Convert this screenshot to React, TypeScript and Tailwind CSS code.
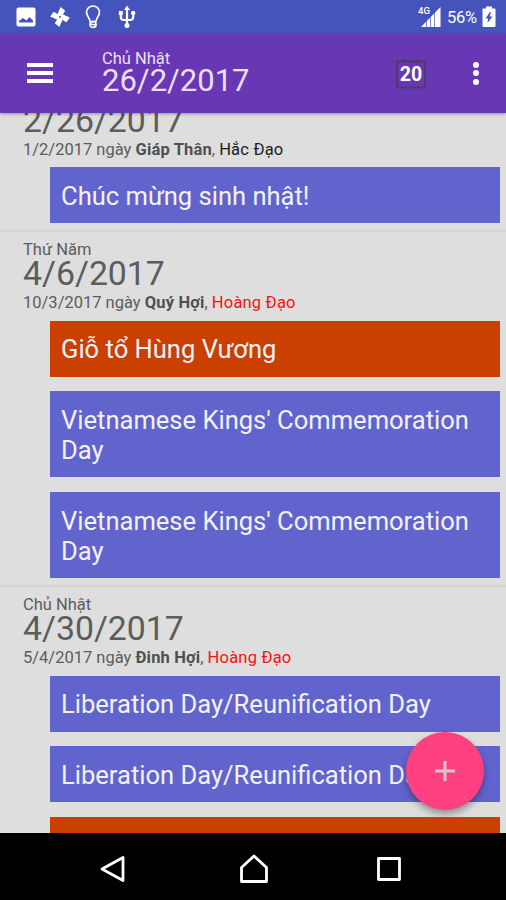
import type { ReactNode } from "react"

type CalendarEvent = {
  title: string
  color: "indigo" | "orange"
  lines?: number
}

type Day = {
  weekday: string
  date: string
  lunar: string
  dayName: string
  luck: string
  lucky: boolean
  events: CalendarEvent[]
}

const EVENT_COLORS = {
  indigo: "bg-[#6264cd]",
  orange: "bg-[#ca4000]",
}

const DAYS: Day[] = [
  {
    weekday: "Chủ Nhật",
    date: "2/26/2017",
    lunar: "1/2/2017",
    dayName: "Giáp Thân",
    luck: "Hắc Đạo",
    lucky: false,
    events: [{ title: "Chúc mừng sinh nhật!", color: "indigo" }],
  },
  {
    weekday: "Thứ Năm",
    date: "4/6/2017",
    lunar: "10/3/2017",
    dayName: "Quý Hợi",
    luck: "Hoàng Đạo",
    lucky: true,
    events: [
      { title: "Giỗ tổ Hùng Vương", color: "orange" },
      { title: "Vietnamese Kings' Commemoration Day", color: "indigo", lines: 2 },
      { title: "Vietnamese Kings' Commemoration Day", color: "indigo", lines: 2 },
    ],
  },
  {
    weekday: "Chủ Nhật",
    date: "4/30/2017",
    lunar: "5/4/2017",
    dayName: "Đinh Hợi",
    luck: "Hoàng Đạo",
    lucky: true,
    events: [
      { title: "Liberation Day/Reunification Day", color: "indigo" },
      { title: "Liberation Day/Reunification Day", color: "indigo" },
      { title: "", color: "orange" },
    ],
  },
]

const PINWHEEL_ANGLES = [0, 90, 180, 270]

function StatusBar() {
  return (
    <div className="flex h-[34px] shrink-0 items-center justify-between bg-[#4454bc] pr-[10px] pl-[16px] text-white">
      <div className="flex items-center">
        <svg width="20" height="20" viewBox="0 0 20 20">
          <path
            fill="white"
            fillRule="evenodd"
            d="M2.500 .5h15a2 2 0 0 1 2 2v15a2 2 0 0 1-2 2h-15a2 2 0 0 1-2-2v-15a2 2 0 0 1 2-2zM3 15.500h14v-2l-3.500-3.500-3 3.500-3.500-2.500-4 3z"
          />
        </svg>
        <svg className="ml-[13px]" width="22" height="22" viewBox="-11 -11 22 22" fill="white">
          {PINWHEEL_ANGLES.map((angle) => (
            <path key={angle} d="M.5 1L-3 -2.500L-1.500 -9.800L3.800 -7.200L1.500 -1z" transform={`rotate(${angle + 12})`} />
          ))}
          <circle r="1" fill="#4454bc" />
        </svg>
        <svg className="ml-[14px]" width="16" height="24" viewBox="0 0 16 24" fill="none" stroke="white" strokeWidth="1.7">
          <path d="M5 16.500C5 13 1.500 11 1.500 7a6.500 6 0 0 1 13 0C14.500 11 11 13 11 16.500Z" />
          <circle cx="8" cy="19.500" r="3" />
          <path d="M6 19l4 1" />
        </svg>
        <svg className="ml-[17px]" width="18" height="24" viewBox="0 0 18 24" fill="none" stroke="white" strokeWidth="2.200">
          <path d="M9 3v17M2.800 8v4q0 3 3 3h6.400q3 0 3-3V8" />
          <path d="M9 .5l3 4.500H6zM.8 6h4v4h-4z" fill="white" stroke="none" />
          <circle cx="15.200" cy="8" r="2.200" fill="white" stroke="none" />
          <circle cx="9" cy="20.500" r="2.500" fill="white" stroke="none" />
        </svg>
      </div>
      <div className="flex items-center">
        <svg width="25" height="24" viewBox="0 0 25 24">
          <text x="0" y="8.500" fill="white" fontFamily="Roboto, sans-serif" fontWeight="500" fontSize="9.500">
            4G
          </text>
          <path d="M3 22L22.500 2V22Z" fill="white" />
          <path d="M8.500 15v7M12.500 11v11M16.500 7v15" stroke="#4454bc" strokeWidth=".7" />
        </svg>
        <span className="ml-[4px] w-[30px] pt-[2px] text-[16.5px] leading-none tracking-[-0.3px] whitespace-nowrap">56%</span>
        <svg className="ml-[5px]" width="14" height="22" viewBox="0 0 14 22">
          <path fill="white" d="M4 .5h6v2h2.500q1 0 1 1V20q0 1-1 1h-11q-1 0-1-1V3.500q0-1 1-1H4z" />
          <path fill="#4454bc" d="M8 6L3.500 12.500H6.200L5.500 17L10.500 10.500H7.700L9 6z" />
        </svg>
      </div>
    </div>
  )
}

function Header() {
  return (
    <header className="z-10 flex h-[79px] shrink-0 items-center bg-[#6838b4] pb-px shadow-[0_1px_3px_rgba(0,0,0,0.35)]">
      <div className="ml-[27px] flex w-[26px] flex-col gap-[4px]">
        <span className="h-[4px] bg-white" />
        <span className="h-[4px] bg-white" />
        <span className="h-[4px] bg-white" />
      </div>
      <div className="ml-[49px] flex-1 pb-[3px] text-[#ecdff8]">
        <div className="text-[16.5px] leading-[18px]">Chủ Nhật</div>
        <div className="text-[31px] leading-[26px]">26/2/2017</div>
      </div>
      <svg width="30" height="32" viewBox="0 0 30 32">
        <path d="M1 4.500h28v26H1zM8.500 2v5M21.500 2v5" fill="none" stroke="#4e3b69" strokeWidth="2" />
        <path d="M6.500 3.500h4M19.500 3.500h4" stroke="#4e3b69" strokeWidth="3" />
        <text x="15" y="24.300" textAnchor="middle" fill="white" fontFamily="Roboto, sans-serif" fontWeight="700" fontSize="19.500">
          20
        </text>
      </svg>
      <div className="mr-[27px] ml-[47px] flex flex-col gap-[2.5px]">
        <span className="size-[6px] rounded-full bg-white" />
        <span className="size-[6px] rounded-full bg-white" />
        <span className="size-[6px] rounded-full bg-white" />
      </div>
    </header>
  )
}

function EventCard({ event }: { event: CalendarEvent }) {
  return (
    <div
      className={`flex items-center pt-[3px] pr-4 pl-[11px] text-[25.55px] leading-[29.5px] text-[#f3f2fc] ${event.lines === 2 ? "h-[86px]" : "h-[56px]"} ${EVENT_COLORS[event.color]}`}
    >
      <span>{event.title}</span>
    </div>
  )
}

function DaySection({ day }: { day: Day }) {
  return (
    <section className="shrink-0 border-t-2 border-[#d5d5d5] pt-[9px] pb-[7px]">
      <div className="pl-[23px] text-[#5c5c5c]">
        <div className="text-[16.5px] leading-[18px]">{day.weekday}</div>
        <div className="text-[33.8px] leading-[29px]">{day.date}</div>
        <div className="pt-[2px] text-[16.5px] leading-[26px]">
          {day.lunar} ngày <b className="font-bold tracking-[0.15px] text-[#505050]">{day.dayName}</b>,{" "}
          <span className={`tracking-[0.2px] ${day.lucky ? "text-[#fa1010]" : "text-[#1c1c1c]"}`}>{day.luck}</span>
        </div>
      </div>
      <div className="mt-[4.5px] mr-[6px] ml-[50px] flex flex-col gap-[14.8px]">
        {day.events.map((event, i) => (
          <EventCard key={i} event={event} />
        ))}
      </div>
    </section>
  )
}

function NavIcon({ children }: { children: ReactNode }) {
  return (
    <svg width="32" height="32" viewBox="0 0 32 32" fill="none" stroke="white" strokeWidth="2.800" strokeLinejoin="round">
      {children}
    </svg>
  )
}

export default function App() {
  return (
    <div className="relative flex h-[900px] w-[506px] flex-col overflow-hidden bg-[#dedede] font-[Roboto,sans-serif]">
      <StatusBar />
      <Header />
      <main className="flex min-h-0 flex-1 flex-col overflow-hidden">
        <div className="-mt-[36.5px]">
          {DAYS.map((day) => (
            <DaySection key={day.date} day={day} />
          ))}
        </div>
      </main>
      <nav className="z-10 flex h-[67px] shrink-0 items-center bg-black pt-[4px] pl-[98px]">
        <NavIcon>
          <path d="M25 4.500v23L4 16z" />
        </NavIcon>
        <div className="ml-[108px]">
          <NavIcon>
            <path d="M16 3L28.500 14.500V28.500H3.500V14.500z" />
          </NavIcon>
        </div>
        <div className="ml-[103px]">
          <NavIcon>
            <path d="M5.500 5.500h21v21h-21z" />
          </NavIcon>
        </div>
      </nav>
      <button className="absolute top-[732px] left-[406px] z-20 flex size-[78px] items-center justify-center rounded-full bg-[#ff4081] shadow-[0_4px_7px_rgba(0,0,0,0.35)]">
        <svg width="20" height="20" viewBox="0 0 20 20" stroke="#dfc5cf" strokeWidth="3">
          <path d="M10 0v20M0 10h20" />
        </svg>
      </button>
    </div>
  )
}
